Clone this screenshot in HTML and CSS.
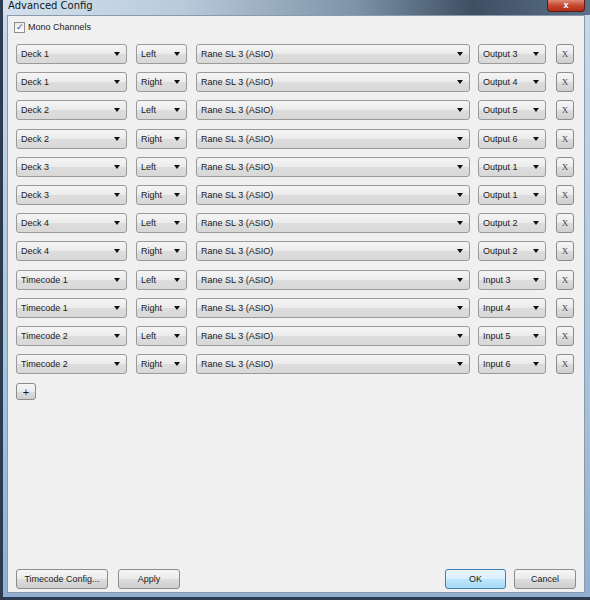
FILE: index.html
```html
<!DOCTYPE html>
<html lang="en">
<head>
  <meta charset="UTF-8">
  <title>Advanced Config</title>
  <link rel="stylesheet" href="styles.css">
</head>
<body>
  <div class="window">
    <!-- Title bar -->
    <div class="titlebar">
      <span class="title">Advanced Config</span>
      <span class="close-btn">x</span>
    </div>

    <div class="client">
      <label class="mono">
        <span class="checkbox">&#10003;</span>
        Mono Channels
      </label>

      <div class="rows" id="rows"></div>

      <button class="btn add-btn">+</button>

      <div class="footer">
        <div class="footer-left">
          <button class="btn tc-btn">Timecode Config...</button>
          <button class="btn apply-btn">Apply</button>
        </div>
        <div class="footer-right">
          <button class="btn ok-btn">OK</button>
          <button class="btn cancel-btn">Cancel</button>
        </div>
      </div>
    </div>
  </div>

  <script>
    // channel mapping rows
    const rows = [
      ["Deck 1", "Left", "Output 3"],
      ["Deck 1", "Right", "Output 4"],
      ["Deck 2", "Left", "Output 5"],
      ["Deck 2", "Right", "Output 6"],
      ["Deck 3", "Left", "Output 1"],
      ["Deck 3", "Right", "Output 1"],
      ["Deck 4", "Left", "Output 2"],
      ["Deck 4", "Right", "Output 2"],
      ["Timecode 1", "Left", "Input 3"],
      ["Timecode 1", "Right", "Input 4"],
      ["Timecode 2", "Left", "Input 5"],
      ["Timecode 2", "Right", "Input 6"]
    ];

    function combo(cls, text) {
      return '<div class="combo ' + cls + '"><span>' + text + '</span><i class="arrow"></i></div>';
    }

    let html = "";
    for (const r of rows) {
      html += '<div class="row">' +
        combo("c-deck", r[0]) +
        combo("c-chan", r[1]) +
        combo("c-dev", "Rane SL 3 (ASIO)") +
        combo("c-out", r[2]) +
        '<button class="btn x-btn">X</button>' +
        '</div>';
    }
    document.getElementById("rows").innerHTML = html;
  </script>
</body>
</html>
```

FILE: styles.css
```css
* {
  margin: 0;
  padding: 0;
  box-sizing: border-box;
}
html, body {
  width: 590px;
  height: 600px;
  overflow: hidden;
  font-family: "Liberation Sans", Arial, sans-serif;
  font-size: 9px;
  color: #1a1a1a;
}
/* Window frame */
.window {
  width: 590px;
  height: 600px;
  display: flex;
  flex-direction: column;
  background: linear-gradient(to bottom, #c9dbec 0%, #a9c4df 60%, #8fb0d2 100%);
  border-left: 3px solid #2c3b4f;
  border-bottom: 3px solid #2c3b4f;
  padding: 0 5px 4px 4px;
}
.titlebar {
  height: 15px;
  position: relative;
  margin: 0 -5px 0 -4px;
  background: linear-gradient(to right, #d4e1ec 0%, #b9cbdb 30%, #7d93a8 60%, #3d4f63 80%, #5b7087 100%);
}
.title {
  position: absolute;
  left: 5px;
  top: 0;
  font-family: "DejaVu Sans", sans-serif;
  font-size: 10px;
  line-height: 12px;
  color: #101820;
}
.close-btn {
  position: absolute;
  right: 5px;
  top: 0;
  width: 38px;
  height: 12px;
  border: 1px solid #5a1d14;
  border-top: none;
  border-radius: 0 0 4px 4px;
  background: linear-gradient(to bottom, #e08a78 0%, #c7472f 50%, #b12c16 100%);
  color: #fff;
  font-weight: bold;
  font-size: 9px;
  line-height: 10px;
  text-align: center;
}
/* Client area */
.client {
  flex: 1;
  background: #f0f0f0;
  border: 1px solid #8a9aab;
  display: flex;
  flex-direction: column;
  padding: 5px 8px 3px 8px;
}
.mono {
  display: flex;
  align-items: center;
  gap: 3px;
  height: 12px;
  margin-left: -2px;
  font-size: 9px;
}
.checkbox {
  width: 11px;
  height: 11px;
  border: 1px solid #8f8f8f;
  background: linear-gradient(to bottom, #e9e9e9, #fdfdfd);
  font-size: 9px;
  line-height: 9px;
  text-align: center;
  color: #3a4a8a;
}
.rows {
  margin-top: 11px;
  display: flex;
  flex-direction: column;
  gap: 8.2px;
}
.row {
  display: flex;
  align-items: center;
  height: 20px;
}
.combo {
  height: 20px;
  border: 1px solid #9a9a9a;
  border-radius: 3px;
  background: linear-gradient(to bottom, #f5f5f5 0%, #ebebeb 50%, #dddddd 51%, #d8d8d8 100%);
  display: flex;
  align-items: center;
  justify-content: space-between;
  padding: 0 6px 0 4px;
  margin-right: 9px;
}
.arrow {
  width: 0;
  height: 0;
  border-left: 3.5px solid transparent;
  border-right: 3.5px solid transparent;
  border-top: 4px solid #111;
}
.c-deck { width: 111px; }
.c-chan { width: 51px; }
.c-dev { width: 274px; margin-right: 8px; }
.c-out { width: 68px; margin-right: 10px; }
/* Buttons */
.btn {
  font-family: "Liberation Sans", Arial, sans-serif;
  font-size: 9px;
  color: #1a1a1a;
  border: 1px solid #8c8c8c;
  border-radius: 3px;
  background: linear-gradient(to bottom, #f6f6f6 0%, #ebebeb 50%, #dddddd 51%, #cfcfcf 100%);
  height: 20px;
}
.x-btn {
  width: 18px;
  font-family: "Liberation Serif", serif;
  font-size: 9px;
  color: #444;
}
.add-btn {
  width: 20px;
  height: 17px;
  margin-top: 9px;
  font-size: 11px;
}
.footer {
  margin-top: auto;
  display: flex;
  justify-content: space-between;
}
.footer-left, .footer-right {
  display: flex;
  gap: 10px;
}
.footer-right {
  gap: 8px;
}
.tc-btn { width: 92px; }
.apply-btn { width: 62px; }
.ok-btn {
  width: 61px;
  border-color: #3c7fb1;
  background: linear-gradient(to bottom, #eaf6fd 0%, #d9f0fc 50%, #bee6fd 51%, #a7d9f5 100%);
}
.cancel-btn { width: 62px; }
```
